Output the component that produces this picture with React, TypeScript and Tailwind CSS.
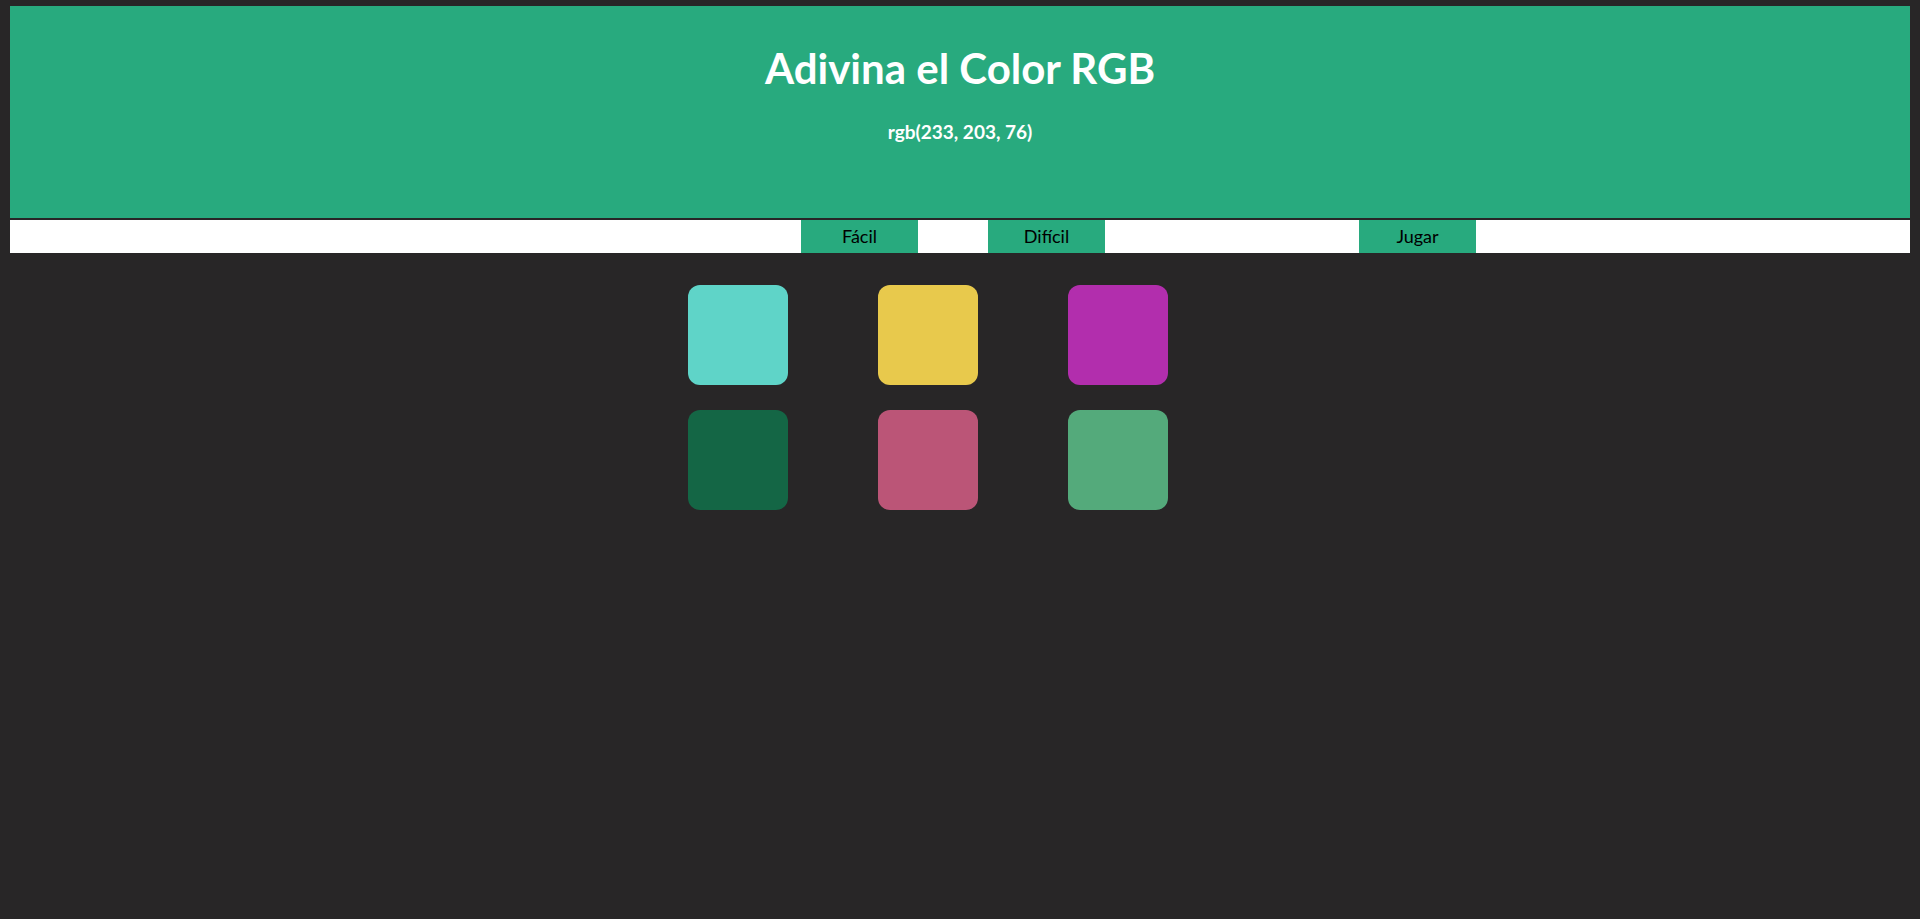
export default function App() {
  const squares = ["#5fd4c8", "#e8c94c", "#b22ead", "#146645", "#bb5577", "#54aa7b"];
  return (
    <div className="min-h-[919px] bg-[#282627] px-[10px] pt-[6px]" style={{ fontFamily: "Lato, 'Open Sans', sans-serif" }}>
      <div className="h-[212px] bg-[#28aa7e] text-white text-center pt-[34px]">
        <h1 className="text-[42px] leading-[56px] font-bold">Adivina el Color RGB</h1>
        <div className="mt-[24px] text-[19px] leading-[24px] font-bold">rgb(233, 203, 76)</div>
      </div>
      <div className="mt-[2px] h-[33px] bg-white flex text-[18px] text-black">
        <div className="w-[791px]" />
        <button className="w-[117px] h-full bg-[#28aa7e] flex items-center justify-center">Fácil</button>
        <div className="w-[70px]" />
        <button className="w-[117px] h-full bg-[#28aa7e] flex items-center justify-center">Difícil</button>
        <div className="w-[254px]" />
        <button className="w-[117px] h-full bg-[#28aa7e] flex items-center justify-center">Jugar</button>
      </div>
      <div className="w-[544px] mx-auto mt-[32px] grid grid-cols-[100px_100px_100px] gap-x-[90px] gap-y-[25px]">
        {squares.map((c) => (
          <div key={c} className="w-[100px] h-[100px] rounded-[12px]" style={{ backgroundColor: c }} />
        ))}
      </div>
    </div>
  );
}
